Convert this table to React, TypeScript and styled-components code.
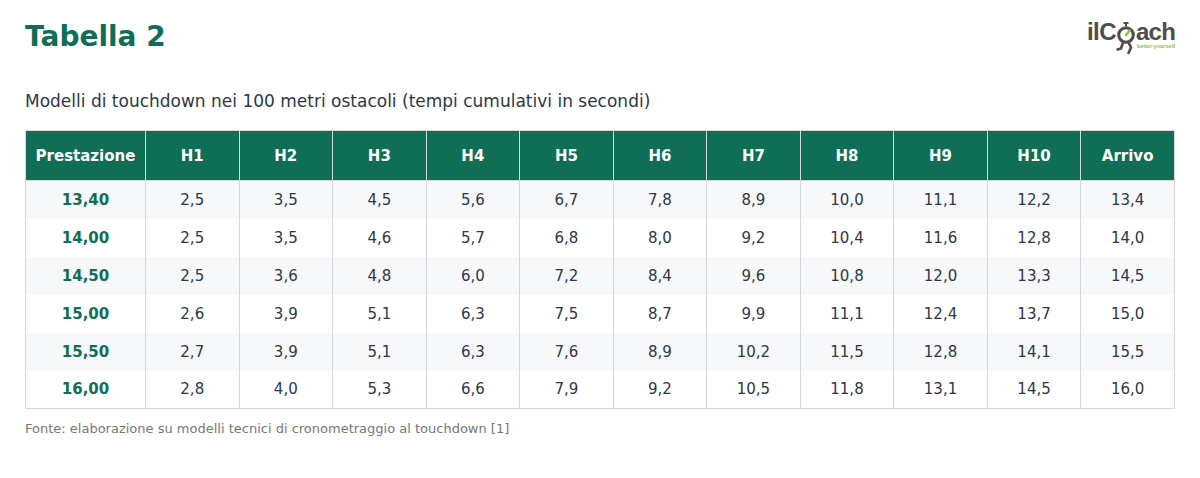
import React from 'react';
import styled, { createGlobalStyle } from 'styled-components';

const GlobalStyle = createGlobalStyle`
  html, body {
    margin: 0;
    padding: 0;
    background: #ffffff;
    font-family: "DejaVu Sans", "Liberation Sans", sans-serif;
  }
`;

const Page = styled.div`
  width: 1200px;
  height: 478px;
  box-sizing: border-box;
  padding: 20px 25px 0 25px;
`;

const Header = styled.div`
  display: flex;
  justify-content: space-between;
  align-items: flex-start;
  height: 34px;
`;

const Title = styled.h1`
  margin: 0;
  font-size: 28px;
  line-height: 34px;
  font-weight: 700;
  color: #0f6e55;
`;

const Logo = styled.div`
  position: relative;
  width: 88px;
  height: 34px;
  margin-top: -2px;
`;

const LogoWord = styled.div`
  display: flex;
  align-items: flex-end;
  height: 24px;
  font-family: "Liberation Sans", sans-serif;
  font-weight: 700;
  font-size: 24px;
  letter-spacing: -0.6px;
  color: #4d4d4d;
  line-height: 20px;
`;

const Tagline = styled.div`
  position: absolute;
  right: 0;
  top: 25px;
  font-family: "Liberation Sans", sans-serif;
  font-size: 5.5px;
  line-height: 6px;
  font-weight: 700;
  color: #8cc43f;
`;

const Subtitle = styled.p`
  margin: 37px 0 19px 0;
  font-size: 17px;
  color: #2d3748;
`;

const Table = styled.table`
  width: 1150px;
  border-collapse: collapse;
  table-layout: fixed;
  border: 1px solid #d5d9de;
`;

const HeadCell = styled.th<{ $wide?: boolean }>`
  width: ${({ $wide }) => ($wide ? '120px' : 'auto')};
  height: 50px;
  padding: 0;
  background: #0f6e55;
  color: #ffffff;
  font-size: 15px;
  font-weight: 700;
  text-align: center;
  border: 1px solid #d5d9de;
  box-sizing: border-box;
`;

const Row = styled.tr<{ $striped: boolean }>`
  background: ${({ $striped }) => ($striped ? '#f7f8fa' : '#ffffff')};
`;

const Cell = styled.td<{ $lead?: boolean }>`
  height: 38px;
  padding: 0;
  text-align: center;
  font-size: 15px;
  font-weight: ${({ $lead }) => ($lead ? 700 : 400)};
  color: ${({ $lead }) => ($lead ? '#0f6e55' : '#2d3748')};
  border-left: 1px solid #d5d9de;
  border-right: 1px solid #d5d9de;
  box-sizing: border-box;
`;

const Source = styled.p`
  margin: 12px 0 0 0;
  font-size: 13px;
  color: #777777;
`;

const headers = ['H1', 'H2', 'H3', 'H4', 'H5', 'H6', 'H7', 'H8', 'H9', 'H10', 'Arrivo'];

const rows: string[][] = [
  ['13,40', '2,5', '3,5', '4,5', '5,6', '6,7', '7,8', '8,9', '10,0', '11,1', '12,2', '13,4'],
  ['14,00', '2,5', '3,5', '4,6', '5,7', '6,8', '8,0', '9,2', '10,4', '11,6', '12,8', '14,0'],
  ['14,50', '2,5', '3,6', '4,8', '6,0', '7,2', '8,4', '9,6', '10,8', '12,0', '13,3', '14,5'],
  ['15,00', '2,6', '3,9', '5,1', '6,3', '7,5', '8,7', '9,9', '11,1', '12,4', '13,7', '15,0'],
  ['15,50', '2,7', '3,9', '5,1', '6,3', '7,6', '8,9', '10,2', '11,5', '12,8', '14,1', '15,5'],
  ['16,00', '2,8', '4,0', '5,3', '6,6', '7,9', '9,2', '10,5', '11,8', '13,1', '14,5', '16,0'],
];

// stopwatch "o" with running legs
const Stopwatch = () => (
  <svg width="20" height="34" viewBox="0 0 20 34" style={{ marginBottom: '-14px', flexShrink: 0 }}>
    <rect x="7.5" y="0" width="5" height="2" rx="0.5" fill="#4d4d4d" />
    <rect x="9" y="1" width="2" height="3.5" fill="#4d4d4d" />
    <circle cx="10" cy="13" r="7.3" fill="none" stroke="#4d4d4d" strokeWidth="3" />
    <line x1="10" y1="13" x2="13.6" y2="8.6" stroke="#8cc43f" strokeWidth="2.6" strokeLinecap="round" />
    <path d="M7 20.5 L5 26.5 L1.5 27.5" fill="none" stroke="#4d4d4d" strokeWidth="2.6" strokeLinecap="round" strokeLinejoin="round" />
    <path d="M12.5 20.5 L15 25.5 L12.5 31" fill="none" stroke="#4d4d4d" strokeWidth="2.6" strokeLinecap="round" strokeLinejoin="round" />
  </svg>
);

const App: React.FC = () => {
  return (
    <>
      <GlobalStyle />
      <Page>
        <Header>
          <Title>Tabella 2</Title>
          <Logo>
            <LogoWord>
              <span>ilC</span>
              <Stopwatch />
              <span>ach</span>
            </LogoWord>
            <Tagline>better yourself</Tagline>
          </Logo>
        </Header>
        <Subtitle>Modelli di touchdown nei 100 metri ostacoli (tempi cumulativi in secondi)</Subtitle>
        <Table>
          <thead>
            <tr>
              <HeadCell $wide>Prestazione</HeadCell>
              {headers.map((h) => (
                <HeadCell key={h}>{h}</HeadCell>
              ))}
            </tr>
          </thead>
          <tbody>
            {rows.map((r, i) => (
              <Row key={r[0]} $striped={i % 2 === 0}>
                {r.map((v, j) => (
                  <Cell key={j} $lead={j === 0}>
                    {v}
                  </Cell>
                ))}
              </Row>
            ))}
          </tbody>
        </Table>
        <Source>Fonte: elaborazione su modelli tecnici di cronometraggio al touchdown [1]</Source>
      </Page>
    </>
  );
};

export default App;
